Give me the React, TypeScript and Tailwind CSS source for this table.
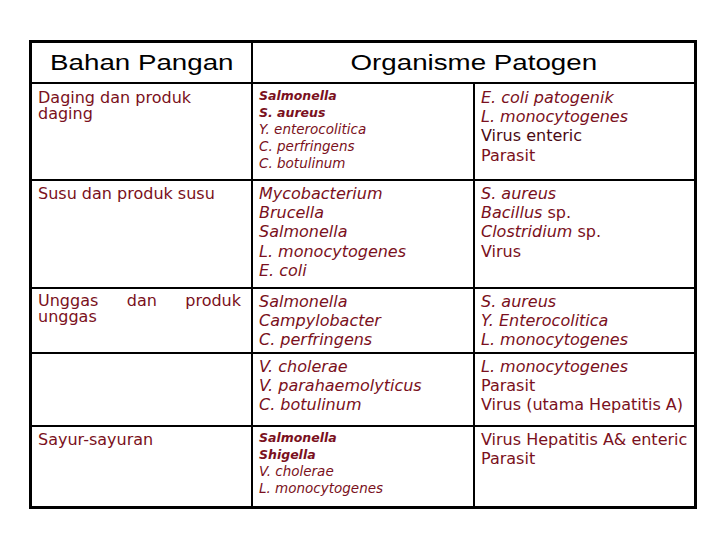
import React from "react";

const body = "font-['DejaVu_Sans',sans-serif] text-[16px] leading-[19.2px] text-[#7a1020]";
const small = "font-['DejaVu_Sans',sans-serif] text-[13.5px] leading-[16.7px] text-[#7a1020]";
const col1 = "bg-white pl-[6px] pr-[10px] font-['DejaVu_Sans',sans-serif] text-[16px] leading-[16px] text-[#7a1020]";

export default function App() {
  return (
    <div className="min-h-[540px] w-[720px] bg-white pt-[40px] pl-[29px]">
      <div className="grid w-[668px] grid-cols-[219px_220px_219px] grid-rows-[39px_95px_106px_63px_71px_79px] gap-[2px] border-[3px] border-black bg-black">
        {/* header */}
        <div className="flex items-center justify-center bg-white font-['Liberation_Sans',Arial,sans-serif] text-[22px] leading-none text-black">
          <span className="inline-block scale-x-[1.26]">Bahan Pangan</span>
        </div>
        <div className="col-span-2 flex items-center justify-center bg-white font-['Liberation_Sans',Arial,sans-serif] text-[22px] leading-none text-black">
          <span className="inline-block scale-x-[1.26]">Organisme Patogen</span>
        </div>

        {/* row 1 */}
        <div className={`${col1} pt-[6px]`}>Daging dan produk daging</div>
        <div className={`${small} bg-white px-[6px] pt-[4px] italic`}>
          <div className="text-[12.5px] font-bold">Salmonella</div>
          <div className="text-[12.5px] font-bold">S. aureus</div>
          <div>Y. enterocolitica</div>
          <div>C. perfringens</div>
          <div>C. botulinum</div>
        </div>
        <div className={`${body} bg-white px-[6px] pt-[4px]`}>
          <div className="italic">E. coli patogenik</div>
          <div className="italic">L. monocytogenes</div>
          <div className="text-[#4a0a14]">Virus enteric</div>
          <div>Parasit</div>
        </div>

        {/* row 2 */}
        <div className={`${col1} pt-[5px]`}>Susu dan produk susu</div>
        <div className={`${body} bg-white px-[6px] pt-[3px] italic`}>
          <div>Mycobacterium</div>
          <div>Brucella</div>
          <div>Salmonella</div>
          <div>L. monocytogenes</div>
          <div>E. coli</div>
        </div>
        <div className={`${body} bg-white px-[6px] pt-[3px]`}>
          <div className="italic">S. aureus</div>
          <div>
            <span className="italic">Bacillus</span> sp.
          </div>
          <div>
            <span className="italic">Clostridium</span> sp.
          </div>
          <div>Virus</div>
        </div>

        {/* row 3 */}
        <div className={`${col1} pt-[4px] text-justify`}>Unggas dan produk unggas</div>
        <div className={`${body} bg-white px-[6px] pt-[3px] italic`}>
          <div>Salmonella</div>
          <div>Campylobacter</div>
          <div>C. perfringens</div>
        </div>
        <div className={`${body} bg-white px-[6px] pt-[3px] italic`}>
          <div>S. aureus</div>
          <div>Y. Enterocolitica</div>
          <div>L. monocytogenes</div>
        </div>

        {/* row 4 */}
        <div className={`${col1} pt-[5px]`}></div>
        <div className={`${body} bg-white px-[6px] pt-[3px] italic`}>
          <div>V. cholerae</div>
          <div>V. parahaemolyticus</div>
          <div>C. botulinum</div>
        </div>
        <div className={`${body} bg-white px-[6px] pt-[3px]`}>
          <div className="italic">L. monocytogenes</div>
          <div>Parasit</div>
          <div>Virus (utama Hepatitis A)</div>
        </div>

        {/* row 5 */}
        <div className={`${col1} pt-[5px]`}>Sayur-sayuran</div>
        <div className={`${small} bg-white px-[6px] pt-[3px] italic`}>
          <div className="text-[12.5px] font-bold">Salmonella</div>
          <div className="text-[12.5px] font-bold">Shigella</div>
          <div>V. cholerae</div>
          <div>L. monocytogenes</div>
        </div>
        <div className={`${body} bg-white px-[6px] pt-[3px]`}>
          <div>Virus Hepatitis A&amp; enteric</div>
          <div>Parasit</div>
        </div>
      </div>
    </div>
  );
}
